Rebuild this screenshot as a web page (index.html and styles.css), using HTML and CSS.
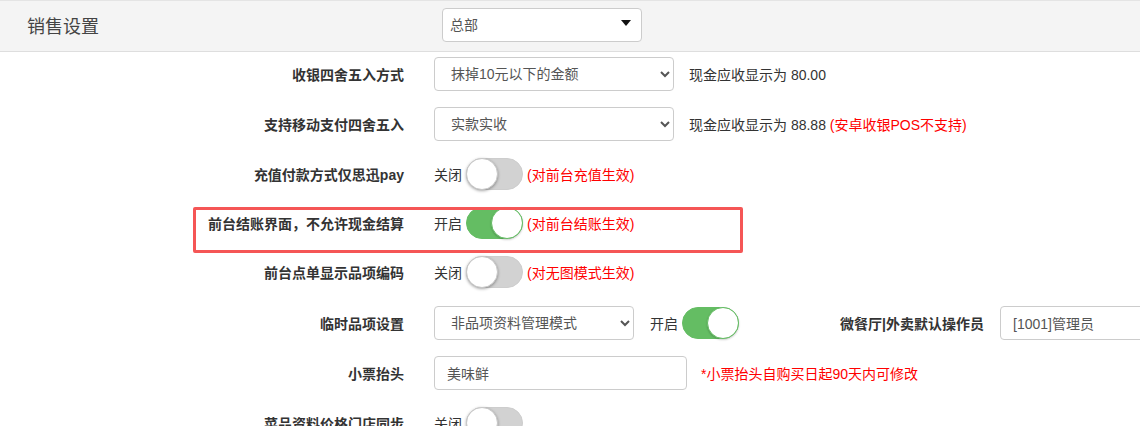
FILE: index.html
```html
<!DOCTYPE html>
<html lang="zh-CN">
<head>
<meta charset="utf-8">
<title>销售设置</title>
<link rel="stylesheet" href="styles.css">
</head>
<body>
<div class="page">
  <header class="topbar">
    <h1 class="topbar-title">销售设置</h1>
    <div class="shop-picker">
      <span>总部</span>
      <i class="caret"></i>
    </div>
  </header>

  <form class="settings">
    <div class="row">
      <label class="row-label">收银四舍五入方式</label>
      <div class="row-controls">
        <select class="field w240"><option>抹掉10元以下的金额</option></select>
        <span class="hint">现金应收显示为 80.00</span>
      </div>
    </div>

    <div class="row">
      <label class="row-label">支持移动支付四舍五入</label>
      <div class="row-controls">
        <select class="field w240"><option>实款实收</option></select>
        <span class="hint">现金应收显示为 88.88 <span class="warn">(安卓收银POS不支持)</span></span>
      </div>
    </div>

    <div class="row row-switch">
      <label class="row-label">充值付款方式仅思迅pay</label>
      <div class="row-controls tight">
        <span class="state">关闭</span>
        <span class="switch"><span class="knob"></span></span>
        <span class="warn">(对前台充值生效)</span>
      </div>
    </div>

    <div class="row row-switch flagged">
      <label class="row-label">前台结账界面，不允许现金结算</label>
      <div class="row-controls tight">
        <span class="state">开启</span>
        <span class="switch on"><span class="knob"></span></span>
        <span class="warn">(对前台结账生效)</span>
      </div>
    </div>

    <div class="row row-switch spaced">
      <label class="row-label">前台点单显示品项编码</label>
      <div class="row-controls tight">
        <span class="state">关闭</span>
        <span class="switch"><span class="knob"></span></span>
        <span class="warn">(对无图模式生效)</span>
      </div>
    </div>

    <div class="row">
      <label class="row-label">临时品项设置</label>
      <div class="row-controls">
        <select class="field w200"><option>非品项资料管理模式</option></select>
        <span class="pair">
          <span class="state">开启</span>
          <span class="switch on"><span class="knob"></span></span>
        </span>
        <label class="row-label side">微餐厅|外卖默认操作员</label>
        <input class="field w200" type="text" value="[1001]管理员">
      </div>
    </div>

    <div class="row">
      <label class="row-label">小票抬头</label>
      <div class="row-controls">
        <input class="field w253" type="text" value="美味鲜">
        <span class="warn note">*小票抬头自购买日起90天内可修改</span>
      </div>
    </div>

    <div class="row row-switch">
      <label class="row-label">菜品资料价格门店同步</label>
      <div class="row-controls tight">
        <span class="state">关闭</span>
        <span class="switch"><span class="knob"></span></span>
      </div>
    </div>
  </form>
</div>
</body>
</html>
```

FILE: styles.css
```css
* {
  box-sizing: border-box;
}

html, body {
  margin: 0;
  padding: 0;
  background: #fff;
}

body {
  font-family: "Liberation Sans", "Noto Sans CJK SC", sans-serif;
  font-size: 14px;
  color: #333;
  overflow: hidden;
}

.page {
  width: 1140px;
  height: 426px;
  overflow: hidden;
}

/* ---- top bar ---- */
.topbar {
  display: flex;
  align-items: center;
  height: 52px;
  background: #f4f4f4;
  border-top: 1px solid #e4e4e4;
  border-bottom: 1px solid #dedede;
}

.topbar-title {
  flex: none;
  width: 442px;
  margin: -2px 0 0;
  padding-left: 27px;
  font-size: 18px;
  font-weight: normal;
  color: #444;
}

.shop-picker {
  display: flex;
  align-items: center;
  justify-content: space-between;
  width: 200px;
  height: 34px;
  margin-top: -2px;
  padding: 0 10px 0 7px;
  background: #fff;
  border: 1px solid #ccc;
  border-radius: 4px;
  font-size: 14px;
  color: #555;
}

.shop-picker span {
  margin-top: -2px;
}

.caret {
  width: 0;
  height: 0;
  margin-top: -5px;
  border-left: 5px solid transparent;
  border-right: 5px solid transparent;
  border-top: 6px solid #111;
}

/* ---- settings rows ---- */
.settings {
  padding-top: 5px;
}

.row {
  position: relative;
  display: flex;
  align-items: center;
  height: 34px;
  margin-bottom: 16px;
}

.row-switch {
  height: 33px;
}

.row.spaced {
  margin-bottom: 18px;
}

.row-label {
  flex: none;
  width: 404px;
  text-align: right;
  font-weight: bold;
  color: #333;
  white-space: nowrap;
}

.row-label.side {
  width: 229px;
  margin-right: 16px;
}

.row-controls {
  display: flex;
  align-items: center;
  gap: 16px;
  margin-left: 30px;
  white-space: nowrap;
}

.row-controls.tight {
  gap: 4px;
}

.pair {
  display: flex;
  align-items: center;
  gap: 4px;
}

.row-label.side + .field {
  margin-left: -16px;
}

/* highlighted row outline */
.flagged::after {
  content: "";
  position: absolute;
  left: 193px;
  top: 1px;
  width: 544px;
  height: 40px;
  border: 3px solid #f55656;
  border-radius: 2px;
  pointer-events: none;
}

.field {
  height: 34px;
  padding: 6px 12px;
  font-family: inherit;
  font-size: 14px;
  color: #555;
  background: #fff;
  border: 1px solid #ccc;
  border-radius: 4px;
  outline: none;
}

select.field {
  padding-left: 12px;
}

.w240 { width: 240px; }
.w200 { width: 200px; }
.w253 { width: 253px; }

.hint {
  color: #333;
  margin-left: -1px;
}

.warn {
  color: #f00;
}

.note {
  margin-left: -2px;
}

.state {
  color: #333;
}

/* ---- toggle switch ---- */
.switch {
  position: relative;
  display: inline-block;
  width: 57px;
  height: 32px;
  border-radius: 16px;
  background: #d2d2d2;
  border: 1px solid #cdcdcd;
}

.switch .knob {
  position: absolute;
  top: -1px;
  left: -1px;
  width: 32px;
  height: 32px;
  border-radius: 50%;
  background: #fff;
  border: 1px solid #c8c8c8;
  box-shadow: 0 1px 3px rgba(0, 0, 0, 0.35);
}

.switch.on {
  background: #64bd63;
  border-color: #64bd63;
}

.switch.on .knob {
  left: auto;
  right: -1px;
  border-color: #64bd63;
  box-shadow: 0 1px 2px rgba(0, 0, 0, 0.2);
}
```
